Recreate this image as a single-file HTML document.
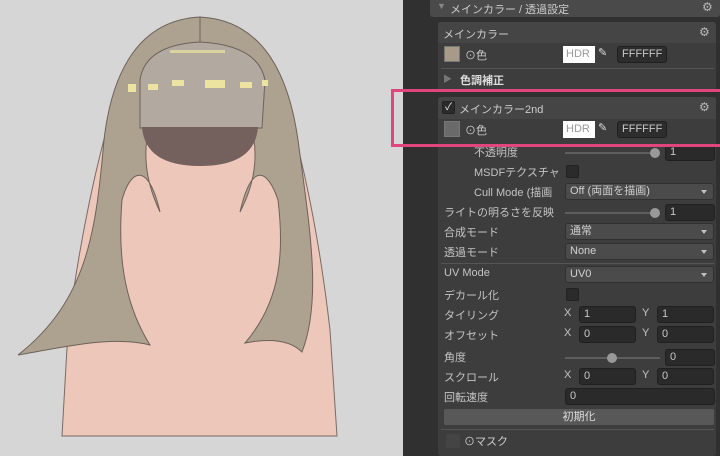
<!DOCTYPE html>
<html><head><meta charset="utf-8"><style>
*{margin:0;padding:0;box-sizing:border-box}
body{width:720px;height:456px;overflow:hidden;position:relative;background:#d6d6d6;font-family:"Liberation Sans","Noto Sans CJK JP",sans-serif;font-size:11px;color:#c4c4c4}
.a{position:absolute;white-space:nowrap}
.f{position:absolute;background:#2a2a2a;border:1px solid #202020;border-radius:3px;color:#c8c8c8;padding-left:4px;line-height:15px;height:17px}
.dd{position:absolute;background:#4b4b4b;border:1px solid #303030;border-radius:3px;color:#d0d0d0;padding-left:4px;line-height:15px;height:17px}
.dd:after{content:"";position:absolute;right:6px;top:6px;border-left:3.5px solid transparent;border-right:3.5px solid transparent;border-top:4px solid #c0c0c0}
.cb{position:absolute;width:13px;height:13px;background:#2b2b2b;border:1px solid #222;border-radius:2px}
.sl{position:absolute;height:2px;background:#5e5e5e}
.kn{position:absolute;width:10px;height:10px;border-radius:5px;background:#999}
.g{position:absolute;color:#bbb;font-size:12px}
.sep{position:absolute;height:1px;background:#555}
</style></head><body>
<svg class="a" style="left:0;top:0" width="403" height="456" viewBox="0 0 403 456">
<path d="M62,436 L68,330 Q85,200 115,100 L285,100 Q315,200 330,330 L337,436 Z" fill="#edc7ba" stroke="#7a6a66" stroke-width="1"/>
<path d="M200,17 C140,20 112,70 104,140 C96,230 88,300 18,355 C60,348 110,335 150,345 C122,300 118,250 122,200 C130,170 148,160 160,212 C140,170 132,110 200,55 Z" fill="#ada190" stroke="#6e625a" stroke-width="1"/>
<path d="M200,17 C260,20 288,70 298,140 C310,230 322,300 302,352 C290,340 270,338 245,343 C282,300 284,250 278,200 C268,170 252,160 240,212 C262,170 268,110 200,55 Z" fill="#ada190" stroke="#6e625a" stroke-width="1"/>
<path d="M140,128 L140,80 Q145,45 200,42 Q258,45 265,80 L262,128 Z" fill="#b2aaa0" stroke="#6e625a" stroke-width="1"/>
<path d="M142,127 L258,127 Q255,166 200,166 Q145,166 142,127 Z" fill="#74605d"/>
<path d="M172,80 h12 v6 h-12z M205,80 h20 v8 h-20z M240,82 h12 v6 h-12z M128,84 h8 v8 h-8z M148,84 h10 v6 h-10z M262,80 h6 v6 h-6z" fill="#ece3a0"/>
<path d="M170,50 h55 v3 h-55z" fill="#ece3a0" opacity=".7"/>
</svg>
<div class="a" style="left:403px;top:0;width:317px;height:456px;background:#303030"></div>
<div class="a" style="left:430px;top:0;width:290px;height:17px;background:#4a4a4a;border-radius:0 0 3px 3px"></div>
<div class="a" style="left:437px;top:1px;color:#888;font-size:9px">▼</div>
<div class="a" style="left:450px;top:1px;color:#ccc">メインカラー / 透過設定</div>
<div class="g" style="left:702px;top:0">⚙</div>
<div class="a" style="left:438px;top:22px;width:278px;height:70px;background:#3d3d3d;border-radius:3px"></div>
<div class="a" style="left:438px;top:22px;width:278px;height:21px;background:#454545;border-radius:3px 3px 0 0"></div>
<div class="a" style="left:443px;top:26px;color:#ccc">メインカラー</div>
<div class="g" style="left:699px;top:25px">⚙</div>
<div class="a" style="left:444px;top:46px;width:16px;height:16px;background:#a89a88;border:1px solid #777"></div>
<div class="a" style="left:465px;top:47px;color:#ccc">⊙色</div>
<div class="a" style="left:563px;top:46px;width:32px;height:17px;background:#fff;color:#999;padding-left:3px;line-height:17px">HDR</div>
<div class="a" style="left:598px;top:46px;color:#ddd">✎</div>
<div class="f" style="left:617px;top:46px;width:50px;background:#2d2d2d">FFFFFF</div>
<div class="sep" style="left:441px;top:68px;width:273px"></div>
<div class="a" style="left:443px;top:72px;color:#777;font-size:9px">▶</div>
<div class="a" style="left:460px;top:72px;color:#ddd;font-weight:bold">色調補正</div>
<div class="a" style="left:438px;top:97px;width:278px;height:359px;background:#3d3d3d;border-radius:3px"></div>
<div class="a" style="left:438px;top:97px;width:278px;height:22px;background:#454545;border-radius:3px 3px 0 0"></div>
<div class="cb" style="left:442px;top:101px;color:#eee;font-size:10px;line-height:11px;text-align:center">✓</div>
<div class="a" style="left:459px;top:101px;color:#ccc">メインカラー2nd</div>
<div class="g" style="left:699px;top:100px">⚙</div>
<div class="a" style="left:444px;top:121px;width:16px;height:16px;background:#6a6a6a;border:1px solid #777"></div>
<div class="a" style="left:465px;top:122px;color:#ccc">⊙色</div>
<div class="a" style="left:563px;top:121px;width:32px;height:17px;background:#fff;color:#999;padding-left:3px;line-height:17px">HDR</div>
<div class="a" style="left:598px;top:121px;color:#ddd">✎</div>
<div class="f" style="left:617px;top:121px;width:50px;background:#2d2d2d">FFFFFF</div>
<div class="a" style="left:474px;top:144px">不透明度</div>
<div class="sl" style="left:565px;top:152px;width:90px"></div><div class="kn" style="left:650px;top:148px"></div>
<div class="f" style="left:665px;top:144px;width:50px">1</div>
<div class="a" style="left:474px;top:164px">MSDFテクスチャ</div>
<div class="cb" style="left:566px;top:165px"></div>
<div class="a" style="left:474px;top:184px">Cull Mode (描画</div>
<div class="dd" style="left:565px;top:183px;width:149px">Off (両面を描画)</div>
<div class="a" style="left:444px;top:204px">ライトの明るさを反映</div>
<div class="sl" style="left:565px;top:212px;width:90px"></div><div class="kn" style="left:650px;top:208px"></div>
<div class="f" style="left:665px;top:204px;width:50px">1</div>
<div class="a" style="left:444px;top:224px">合成モード</div>
<div class="dd" style="left:565px;top:223px;width:149px">通常</div>
<div class="a" style="left:444px;top:244px">透過モード</div>
<div class="dd" style="left:565px;top:243px;width:149px">None</div>
<div class="sep" style="left:441px;top:263px;width:273px"></div>
<div class="a" style="left:444px;top:267px">UV Mode</div>
<div class="dd" style="left:565px;top:266px;width:149px">UV0</div>
<div class="a" style="left:444px;top:287px">デカール化</div>
<div class="cb" style="left:566px;top:288px"></div>
<div class="a" style="left:444px;top:307px">タイリング</div>
<div class="a" style="left:564px;top:307px">X</div><div class="f" style="left:579px;top:306px;width:57px">1</div>
<div class="a" style="left:642px;top:307px">Y</div><div class="f" style="left:657px;top:306px;width:57px">1</div>
<div class="a" style="left:444px;top:327px">オフセット</div>
<div class="a" style="left:564px;top:327px">X</div><div class="f" style="left:579px;top:326px;width:57px">0</div>
<div class="a" style="left:642px;top:327px">Y</div><div class="f" style="left:657px;top:326px;width:57px">0</div>
<div class="a" style="left:444px;top:349px">角度</div>
<div class="sl" style="left:565px;top:357px;width:95px"></div><div class="kn" style="left:607px;top:353px"></div>
<div class="f" style="left:665px;top:349px;width:50px">0</div>
<div class="a" style="left:444px;top:369px">スクロール</div>
<div class="a" style="left:564px;top:369px">X</div><div class="f" style="left:579px;top:368px;width:57px">0</div>
<div class="a" style="left:642px;top:369px">Y</div><div class="f" style="left:657px;top:368px;width:57px">0</div>
<div class="a" style="left:444px;top:389px">回転速度</div>
<div class="f" style="left:565px;top:388px;width:150px">0</div>
<div class="a" style="left:444px;top:409px;width:270px;height:16px;background:#585858;border-radius:2px;color:#ddd;text-align:center;line-height:16px">初期化</div>
<div class="sep" style="left:441px;top:429px;width:273px"></div>
<div class="a" style="left:446px;top:434px;width:14px;height:14px;background:#444"></div>
<div class="a" style="left:464px;top:433px;color:#ccc">⊙マスク</div>
<div class="a" style="left:391px;top:89px;width:329px;height:58px;border:3px solid #e0457d;border-right:none"></div>
</body></html>
